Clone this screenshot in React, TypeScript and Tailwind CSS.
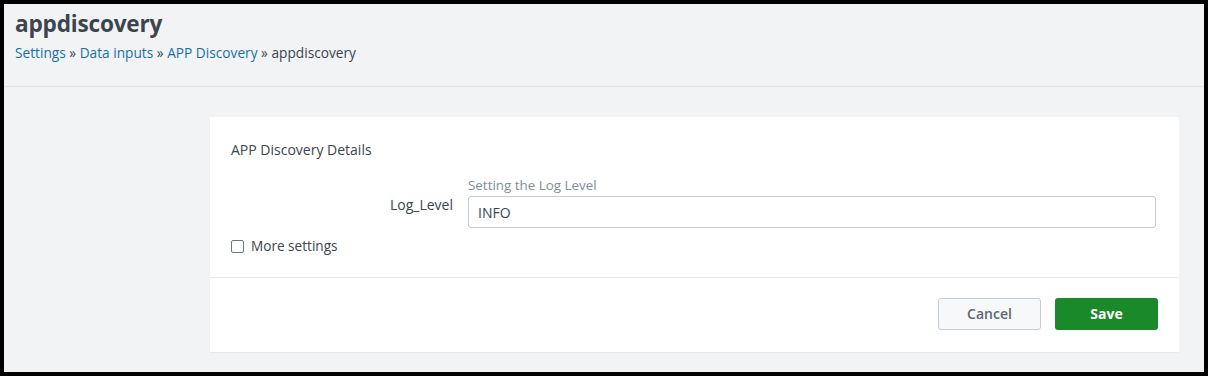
import React from "react";

export default function App() {
  return (
    <div className="w-[1208px] h-[376px] bg-black p-[4px]" style={{ fontFamily: "'Open Sans', sans-serif" }}>
      <div className="w-full h-full bg-[#f2f3f5] flex flex-col">
        <div className="h-[83px] border-b border-[#e1e5e8] px-[11px] pt-[5px]">
          <h1 className="text-[22.6px] font-bold text-[#3c444d] leading-[30px] tracking-[-0.2px]">appdiscovery</h1>
          <div className="mt-[4px] text-[13.7px] leading-[20px] text-[#3c444d]">
            <span className="text-[#1a6fa8]">Settings</span> » <span className="text-[#1a6fa8]">Data inputs</span> »{" "}
            <span className="text-[#1a6fa8]">APP Discovery</span> » appdiscovery
          </div>
        </div>
        <div className="pl-[206px] pr-[21px] pt-[30px]">
          <div className="bg-white w-[969px] shadow-[0_1px_1px_rgba(0,0,0,0.04)]">
            <div className="px-[21px] pt-[24px] pb-[22px]">
              <div className="text-[14px] text-[#3c444d] leading-[18px]">APP Discovery Details</div>
              <div className="flex mt-[18px]">
                <div className="w-[237px] text-right text-[14px] text-[#3c444d] pt-[19px] pr-[15px] leading-[18px]">Log_Level</div>
                <div className="flex-1 mr-[2px]">
                  <div className="text-[13.4px] text-[#818d99] leading-[16px] mb-[3px]">Setting the Log Level</div>
                  <div className="h-[32px] border border-[#c3cbd4] rounded-[3px] px-[9px] flex items-center text-[14px] text-[#3c444d]">INFO</div>
                </div>
              </div>
              <label className="flex items-center gap-[7px] mt-[9px] text-[13.6px] text-[#3c444d] leading-[18px]">
                <span className="w-[13px] h-[13px] border border-[#6b7785] rounded-[2px] bg-white inline-block" />
                More settings
              </label>
            </div>
            <div className="border-t border-[#e8ebee] h-[75px] flex items-start pt-[20px] justify-end pr-[21px] gap-[14px]">
              <button className="w-[103px] h-[32px] bg-[#f7f8fa] border border-[#c3cbd4] rounded-[3px] text-[14px] leading-[18px] font-semibold text-[#5c6773]">Cancel</button>
              <button className="w-[103px] h-[32px] bg-[#1a8929] rounded-[3px] text-[14px] leading-[18px] font-bold text-white">Save</button>
            </div>
          </div>
        </div>
      </div>
    </div>
  );
}
